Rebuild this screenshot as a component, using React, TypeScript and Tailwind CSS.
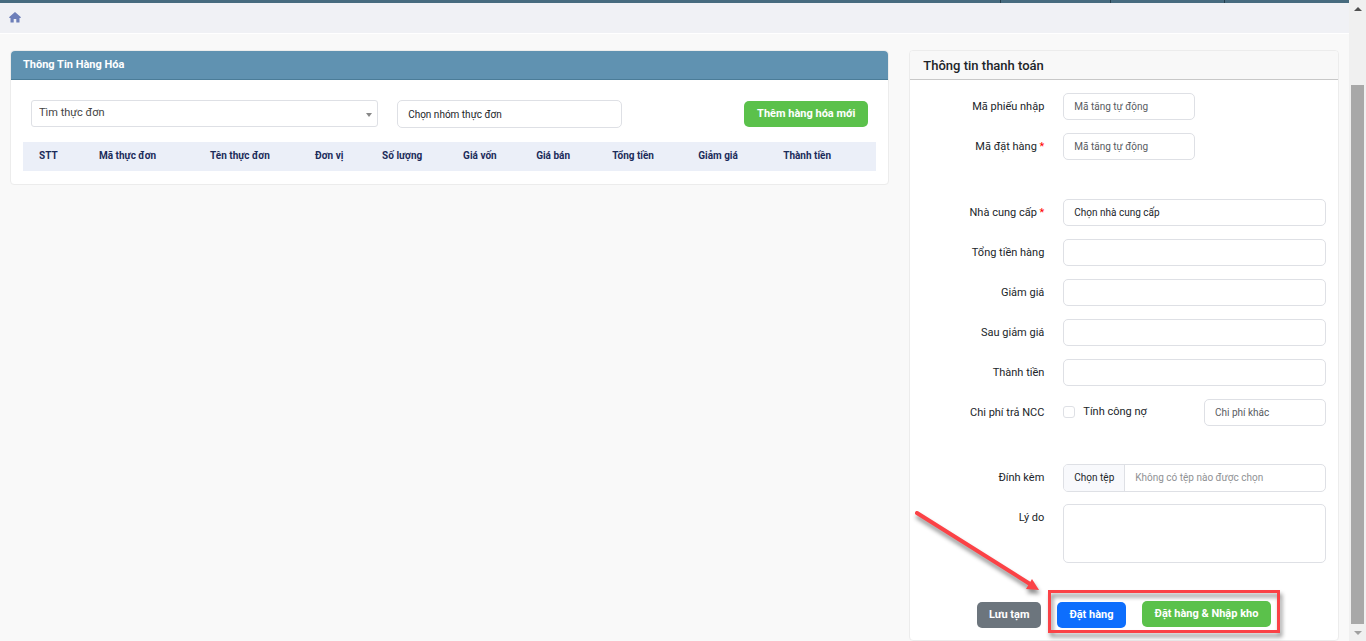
import type { ReactNode } from "react";

const controlClass =
  "block w-full rounded-[5px] border border-[#dee0e5] bg-white px-[10px] text-[10px] text-[#212529] outline-none placeholder:text-[#595c5f]";
const inputClass = controlClass + " h-[27px]";

const columns = [
  { name: "STT", width: "w-[60px]" },
  { name: "Mã thực đơn", width: "w-[111px]" },
  { name: "Tên thực đơn", width: "w-[105px]" },
  { name: "Đơn vị", width: "w-[67px]" },
  { name: "Số lượng", width: "w-[81px]" },
  { name: "Giá vốn", width: "w-[73px]" },
  { name: "Giá bán", width: "w-[76px]" },
  { name: "Tổng tiền", width: "w-[86px]" },
  { name: "Giảm giá", width: "w-[85px]" },
  { name: "Thành tiền", width: "w-[109px]" },
];

type FieldProps = {
  id: string;
  label: string;
  required?: boolean;
  children: ReactNode;
};

function Field({ id, label, required, children }: FieldProps) {
  return (
    <div className="grid grid-cols-[141px_1fr]">
      <label htmlFor={id} className="pr-[19px] pt-[5px] text-right text-[11px] leading-[18px] text-[#212529]">
        {label}
        {required && <span className="text-[#f00]"> *</span>}
      </label>
      <div>{children}</div>
    </div>
  );
}

function ProductCard() {
  return (
    <section className="rounded-[4px] border border-[#ececec] bg-white">
      <h2 className="h-[29px] rounded-t-[4px] border-b border-[#4b7c98] bg-[#6092b1] px-3 text-[11px] leading-[28px] font-bold text-white">
        Thông Tin Hàng Hóa
      </h2>
      <div className="px-3 pt-5 pb-[13px]">
        <div className="grid grid-cols-[347fr_225fr_227fr] gap-[19px] px-2">
          <div className="relative">
            <select
              aria-label="Tìm thực đơn"
              className="block h-[27px] w-full appearance-none rounded-[3px] border border-[#dee0e5] bg-white px-[7px] text-[11px] text-[#444] outline-none"
            >
              <option>Tìm thực đơn</option>
            </select>
            <span className="pointer-events-none absolute top-[13px] right-[6px] border-x-[3px] border-t-4 border-x-transparent border-t-[#888]" />
          </div>
          <select aria-label="Nhóm thực đơn" className={controlClass + " h-7 appearance-none"}>
            <option>Chọn nhóm thực đơn</option>
          </select>
          <button
            type="button"
            className="mt-px h-[26px] justify-self-end rounded-[5px] bg-[#5bc14b] px-[13px] text-[11px] font-bold whitespace-nowrap text-white"
          >
            Thêm hàng hóa mới
          </button>
        </div>

        <table className="mt-[14px] w-full table-fixed">
          <thead>
            <tr className="h-[29px] bg-[#ebeff8]">
              {columns.map((col) => (
                <th
                  key={col.name}
                  className={col.width + " pb-[2px] pl-4 text-left text-[10px] font-bold whitespace-nowrap text-[#1c2c5b]"}
                >
                  {col.name}
                </th>
              ))}
            </tr>
          </thead>
        </table>
      </div>
    </section>
  );
}

function PaymentCard() {
  return (
    <section className="rounded-[4px] border border-[#ececec] bg-white">
      <h2 className="h-[29px] rounded-t-[4px] border-b border-[#c8c8c8] bg-[#f8f8f8] px-[13px] pt-px text-[13px] leading-[28px] font-medium text-[#212529]">
        Thông tin thanh toán
      </h2>
      <form className="px-3 pt-[13px] pb-3">
        <div className="space-y-[13px]">
          <Field id="receipt" label="Mã phiếu nhập">
            <div className="w-1/2">
              <input id="receipt" placeholder="Mã tăng tự động" className={inputClass} />
            </div>
          </Field>
          <Field id="order" label="Mã đặt hàng" required>
            <div className="w-1/2">
              <input id="order" placeholder="Mã tăng tự động" className={inputClass} />
            </div>
          </Field>
        </div>

        <div className="mt-[39px] space-y-[13px]">
          <Field id="supplier" label="Nhà cung cấp" required>
            <select id="supplier" className={inputClass + " appearance-none"}>
              <option>Chọn nhà cung cấp</option>
            </select>
          </Field>
          <Field id="subtotal" label="Tổng tiền hàng">
            <input id="subtotal" className={inputClass} />
          </Field>
          <Field id="discount" label="Giảm giá">
            <input id="discount" className={inputClass} />
          </Field>
          <Field id="after" label="Sau giảm giá">
            <input id="after" className={inputClass} />
          </Field>
          <Field id="total" label="Thành tiền">
            <input id="total" className={inputClass} />
          </Field>
          <Field id="cost" label="Chi phí trả NCC">
            <div className="flex justify-between">
              <label className="flex h-[26px] items-center gap-2 text-[11px] text-[#212529]">
                <input
                  type="checkbox"
                  className="size-3 appearance-none rounded-[3px] border border-[#dee0e5] bg-white checked:bg-[#0d6efd]"
                />
                Tính công nợ
              </label>
              <div className="w-[122px]">
                <input id="cost" placeholder="Chi phí khác" className={inputClass} />
              </div>
            </div>
          </Field>
        </div>

        <div className="mt-[38px] space-y-3">
          <Field id="file" label="Đính kèm">
            <label
              htmlFor="file"
              className="flex h-7 overflow-hidden rounded-[5px] border border-[#dee0e5] text-[10px] leading-[26px]"
            >
              <span className="border-r border-[#dee0e5] bg-[#f8f9fc] px-[10px] text-[#212529]">Chọn tệp</span>
              <span className="px-[10px] text-[#8f9194]">Không có tệp nào được chọn</span>
            </label>
            <input id="file" type="file" className="sr-only" />
          </Field>
          <Field id="reason" label="Lý do">
            <textarea
              id="reason"
              className="block h-[59px] w-full resize-none rounded-[5px] border border-[#dee0e5] bg-white p-2 text-[10px] outline-none"
            />
          </Field>
        </div>

        <div className="mt-[38px] flex items-end justify-center gap-4 text-[11px] font-bold whitespace-nowrap text-white">
          <button type="button" className="h-[26px] rounded-[5px] bg-[#6c757d] px-3">
            Lưu tạm
          </button>
          <div className="relative flex items-start gap-4">
            <button type="button" className="mt-px h-[26px] rounded-[5px] bg-[#0d6efd] px-3">
              Đặt hàng
            </button>
            <button type="button" className="h-[26px] rounded-[5px] bg-[#5bc14b] px-[13px]">
              Đặt hàng &amp; Nhập kho
            </button>

            {/* Highlight frame and arrow */}
            <div className="pointer-events-none absolute -top-[11px] -right-[9px] -bottom-[5px] -left-[9px] border-[3px] border-[#fb4246] drop-shadow-[2px_4px_2px_rgba(0,0,0,0.45)]" />
            <svg
              className="pointer-events-none absolute -top-[101px] -left-[148px] h-[100px] w-[140px] drop-shadow-[1px_4px_2px_rgba(0,0,0,0.45)]"
              viewBox="0 0 140 100"
              aria-hidden="true"
            >
              <path d="M8 13 L121 84" stroke="#fb4246" strokeWidth="4" strokeLinecap="round" />
              <path d="M130 90 L117 89 L123 79 Z" fill="#fb4246" />
            </svg>
          </div>
        </div>
      </form>
    </section>
  );
}

function Scrollbar() {
  return (
    <div className="flex w-[17px] shrink-0 flex-col items-center bg-[#f0f0f0]" aria-hidden="true">
      <div className="flex h-[17px] items-center">
        <span className="border-x-4 border-b-4 border-x-transparent border-b-[#505050]" />
      </div>
      <div className="mt-[68px] w-[13px] flex-1 bg-[#a8a8a8]" />
      <div className="flex h-[17px] items-center">
        <span className="border-x-4 border-t-4 border-x-transparent border-t-[#a0a0a0]" />
      </div>
    </div>
  );
}

export default function App() {
  return (
    <div className="flex h-screen overflow-hidden bg-[#f9f9f9] font-['Roboto','Noto_Sans',sans-serif]">
      <div className="min-w-0 flex-1">
        <div className="flex h-[3px] justify-end bg-[#476b7f]">
          <span className="w-[110px] border-l border-[#263f4d]" />
          <span className="w-[114px] border-l border-[#263f4d]" />
          <span className="w-[125px] border-l border-[#263f4d]" />
        </div>
        <nav className="flex h-[31px] items-center border-b border-white bg-[#f0f1f5] px-[9px]">
          <a href="#" aria-label="Trang chủ">
            <svg className="mb-px h-[11px] w-3" viewBox="0 0 12 11" fill="#6d7fb9">
              <path d="M6 0 L12 5.3 L11.4 6 H10.5 V10.5 H7.3 V7 H4.7 V10.5 H1.5 V6 H.6 L0 5.3 Z" />
            </svg>
          </a>
        </nav>
        <main className="grid grid-cols-3 items-start pt-4">
          <div className="col-span-2 px-[10px]">
            <ProductCard />
          </div>
          <div className="px-[10px]">
            <PaymentCard />
          </div>
        </main>
      </div>
      <Scrollbar />
    </div>
  );
}
